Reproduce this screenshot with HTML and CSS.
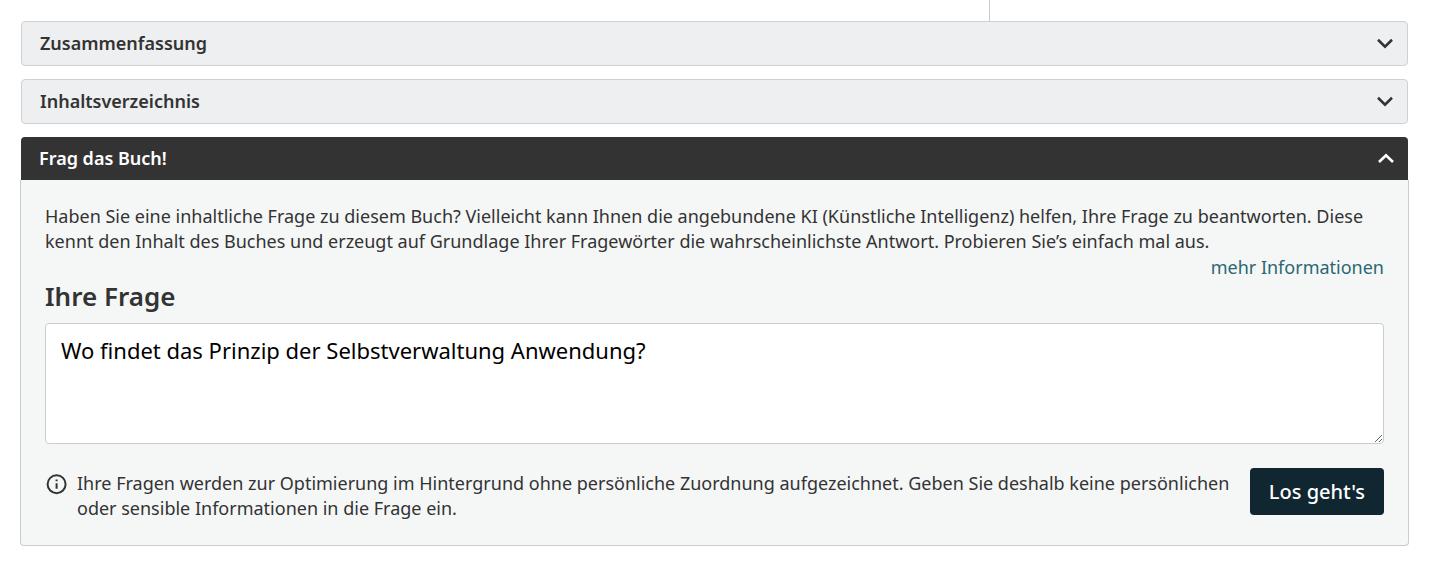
FILE: index.html
```html
<!DOCTYPE html>
<html lang="de">
<head>
    <meta charset="utf-8">
    <title>Frag das Buch!</title>
    <meta name="viewport" content="width=device-width, initial-scale=1">
    <link rel="stylesheet" href="styles.css">
</head>
<body>
    <main class="page">
        <div class="columns">
            <div class="column-main"></div>
            <div class="column-side"></div>
        </div>

        <div class="accordion">
            <details class="panel">
                <summary class="panel-title">
                    <span>Zusammenfassung</span>
                    <svg class="chevron" viewBox="0 0 18 18" aria-hidden="true"><path d="M2 4.8 9 11.6l7-6.8"/></svg>
                </summary>
            </details>

            <details class="panel">
                <summary class="panel-title">
                    <span>Inhaltsverzeichnis</span>
                    <svg class="chevron" viewBox="0 0 18 18" aria-hidden="true"><path d="M2 4.8 9 11.6l7-6.8"/></svg>
                </summary>
            </details>

            <details class="panel" open>
                <summary class="panel-title">
                    <span>Frag das Buch!</span>
                    <svg class="chevron" viewBox="0 0 18 18" aria-hidden="true"><path d="M2 12 9 5.2l7 6.8"/></svg>
                </summary>
                <form class="panel-body">
                    <p class="text">Haben Sie eine inhaltliche Frage zu diesem Buch? Vielleicht kann Ihnen die angebundene KI (Künstliche Intelligenz) helfen, Ihre Frage zu beantworten. Diese kennt den Inhalt des Buches und erzeugt auf Grundlage Ihrer Fragewörter die wahrscheinlichste Antwort. Probieren Sie’s einfach mal aus.</p>
                    <a class="more" href="#">mehr Informationen</a>
                    <label class="question-label" for="question">Ihre Frage</label>
                    <textarea class="question" id="question" name="question" spellcheck="false">Wo findet das Prinzip der Selbstverwaltung Anwendung?</textarea>
                    <div class="footer">
                        <svg class="info" viewBox="0 0 24 24" aria-hidden="true">
                            <circle cx="11.6" cy="12.2" r="9"/>
                            <path d="M11.6 11.2v5.5M11.6 7.4v1.9"/>
                        </svg>
                        <p class="text hint">Ihre Fragen werden zur Optimierung im Hintergrund ohne persönliche Zuordnung aufgezeichnet. Geben Sie deshalb keine persönlichen oder sensible Informationen in die Frage ein.</p>
                        <button class="submit" type="button">Los geht's</button>
                    </div>
                </form>
            </details>
        </div>
    </main>
</body>
</html>
```

FILE: styles.css
```css
* {
    box-sizing: border-box;
}
body {
    margin: 0;
    background: #fff;
    color: #333;
    font-family: "Noto Sans", sans-serif;
    font-size: 18px;
    line-height: 25px;
}
.page {
    padding: 0 20px;
}

/* end of the two columns above the accordion */
.columns {
    display: flex;
    height: 21px;
    padding-right: 3px;
}
.column-main {
    flex: 0 0 70%;
    border-right: 1px solid #ccc;
}
.column-side {
    flex: 1;
}

.accordion {
    display: flex;
    flex-direction: column;
    gap: 13px;
}
.panel-title {
    display: flex;
    align-items: center;
    justify-content: space-between;
    margin: 0 1px;
    padding: 9px 13px 9px 18px;
    border: 1px solid #cfd1d2;
    border-radius: 4px;
    background: #edeff0;
    font-weight: 600;
    list-style: none;
    cursor: pointer;
}
.panel-title::-webkit-details-marker {
    display: none;
}
.chevron {
    width: 18px;
    height: 18px;
    fill: none;
    stroke: currentColor;
    stroke-width: 2.6;
}
.panel[open] .panel-title {
    border: 0;
    border-radius: 4px 4px 0 0;
    background: #333;
    color: #fff;
}
.panel-body {
    display: flex;
    flex-direction: column;
    padding: 24px;
    border: 1px solid #ccc;
    border-top: 0;
    border-radius: 0 0 4px 4px;
    background: #f5f7f7;
}
.text {
    margin: 0;
}
.more {
    align-self: flex-end;
    margin-top: 1px;
    color: #2a6773;
    text-decoration: none;
}
.question-label {
    margin-bottom: 11px;
    font-size: 26px;
    font-weight: 600;
    line-height: 32px;
}
.question {
    display: block;
    width: 100%;
    height: 121px;
    padding: 11px 15px;
    border: 1px solid #ccc;
    border-radius: 4px;
    background: #fff;
    color: #000;
    font-family: inherit;
    font-size: 22px;
    line-height: 30px;
    resize: vertical;
}
.footer {
    display: flex;
    align-items: flex-start;
    margin-top: 24px;
}
.info {
    flex: none;
    width: 24px;
    height: 24px;
    margin: 4px 8px 0 0;
    fill: none;
    stroke: #333;
    stroke-width: 2;
}
.hint {
    flex: 1;
    padding: 3px 16px 0 0;
}
.submit {
    flex: none;
    padding: 9px 19px;
    border: 0;
    border-radius: 4px;
    background: #102630;
    color: #fff;
    font-family: inherit;
    font-size: 20px;
    font-weight: 500;
    line-height: 29px;
    cursor: pointer;
}
```
